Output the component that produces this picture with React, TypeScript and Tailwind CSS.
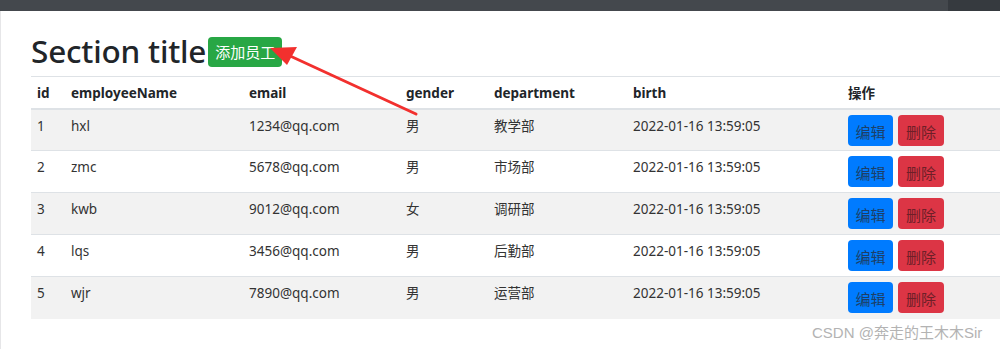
import React from 'react';

const rows = [
  { id: 1, name: 'hxl', email: '1234@qq.com', gender: '男', dept: '教学部' },
  { id: 2, name: 'zmc', email: '5678@qq.com', gender: '男', dept: '市场部' },
  { id: 3, name: 'kwb', email: '9012@qq.com', gender: '女', dept: '调研部' },
  { id: 4, name: 'lqs', email: '3456@qq.com', gender: '男', dept: '后勤部' },
  { id: 5, name: 'wjr', email: '7890@qq.com', gender: '男', dept: '运营部' },
];

const font = { fontFamily: '"Noto Sans", "Noto Sans CJK SC", sans-serif' };

const App: React.FC = () => {
  return (
    <div className="relative w-[1000px] h-[349px] overflow-hidden bg-white text-[#212529]" style={font}>
      {/* top navbar */}
      <div className="flex h-[11px]">
        <div className="flex-1 bg-[#44484d]"></div>
        <div className="w-[52px] bg-[#363a3f]"></div>
      </div>

      <div className="flex h-[338px]">
        {/* sidebar edge */}
        <div className="w-[7px] bg-[#f7f7f8] border-r border-[#e6e6e8]"></div>

        <main className="flex-1 pl-[24px] pt-[22px]">
          {/* title row */}
          <div className="flex items-start h-[43px] pl-[6px]">
            <h2 className="text-[31.5px] leading-[36px] font-medium tracking-[-0.2px]">Section title</h2>
            <button className="ml-[2px] mt-[4px] h-[30px] px-[7px] rounded-[4px] bg-[#28a745] text-white text-[15px] leading-[30px]">
              添加员工
            </button>
          </div>

          {/* table */}
          <table className="ml-[6px] w-[980px] border-collapse text-[13.5px] table-fixed">
            <colgroup>
              <col className="w-[34px]" />
              <col className="w-[178px]" />
              <col className="w-[157px]" />
              <col className="w-[88px]" />
              <col className="w-[139px]" />
              <col className="w-[215px]" />
              <col />
            </colgroup>
            <thead>
              <tr className="h-[32px] border-t border-b-2 border-[#dee2e6] text-left">
                <th className="pl-[6px] pt-[2px] font-bold">id</th>
                <th className="pl-[6px] pt-[2px] font-bold">employeeName</th>
                <th className="pl-[6px] pt-[2px] font-bold">email</th>
                <th className="pl-[6px] pt-[2px] font-bold">gender</th>
                <th className="pl-[6px] pt-[2px] font-bold">department</th>
                <th className="pl-[6px] pt-[2px] font-bold">birth</th>
                <th className="pl-[6px] pt-[2px] font-bold">操作</th>
              </tr>
            </thead>
            <tbody>
              {rows.map((r, i) => (
                <tr key={r.id} className={(i % 2 === 0 ? 'bg-[#f2f2f2] ' : 'bg-white ') + 'border-t border-[#dee2e6] h-[42px]'}>
                  <td className="pl-[6px] pt-[4px] align-top leading-[24px] text-[#333]">{r.id}</td>
                  <td className="pl-[6px] pt-[4px] align-top leading-[24px] text-[#333]">{r.name}</td>
                  <td className="pl-[6px] pt-[4px] align-top leading-[24px] text-[#333]">{r.email}</td>
                  <td className="pl-[6px] pt-[4px] align-top leading-[24px] text-[#333]">{r.gender}</td>
                  <td className="pl-[6px] pt-[4px] align-top leading-[24px] text-[#333]">{r.dept}</td>
                  <td className="pl-[6px] pt-[4px] align-top leading-[24px] text-[#333]">2022-01-16 13:59:05</td>
                  <td className="pl-[6px] pt-[5px] align-top">
                    <div className="flex gap-[5px]">
                      <button className="w-[45px] h-[31px] rounded-[4px] bg-[#007bff] text-[#1d3f66] text-[15px] leading-[31px] pt-[2px]">编辑</button>
                      <button className="w-[46px] h-[31px] rounded-[4px] bg-[#dc3545] text-[#6e1f28] text-[15px] leading-[31px] pt-[2px]">删除</button>
                    </div>
                  </td>
                </tr>
              ))}
            </tbody>
          </table>
        </main>
      </div>

      {/* red annotation arrow */}
      <svg className="absolute left-0 top-0 pointer-events-none" width="1000" height="349">
        <line x1="416" y1="114" x2="288" y2="55" stroke="#f2302e" strokeWidth="3" strokeLinecap="round" />
        <polygon points="270,48 297,47 287,65" fill="#f2302e" />
      </svg>

      {/* watermark */}
      <div className="absolute left-[812px] top-[322px] text-[15px] text-[#b3b3b3]" style={{ fontFamily: '"Liberation Sans", "Noto Sans CJK SC", sans-serif' }}>
        CSDN @奔走的王木木Sir
      </div>
    </div>
  );
};

export default App;
